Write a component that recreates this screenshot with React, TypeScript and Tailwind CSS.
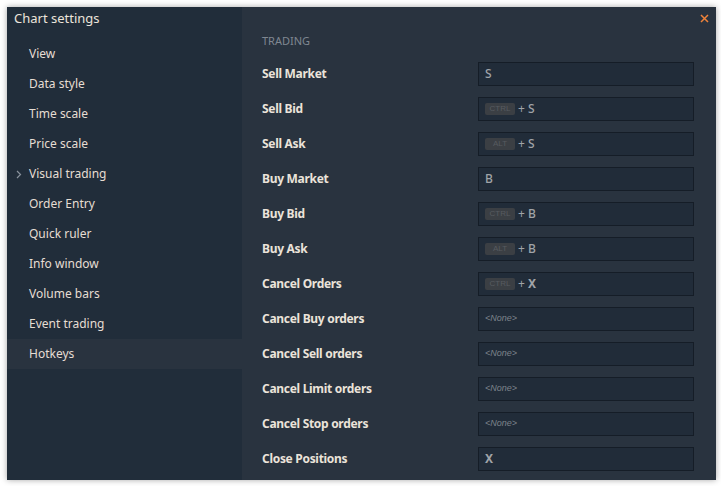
import React from "react";

const menu = [
  "View",
  "Data style",
  "Time scale",
  "Price scale",
  "Visual trading",
  "Order Entry",
  "Quick ruler",
  "Info window",
  "Volume bars",
  "Event trading",
  "Hotkeys",
];

type Val = { mod?: string; key?: string; none?: boolean };
const rows: { label: string; v: Val }[] = [
  { label: "Sell Market", v: { key: "S" } },
  { label: "Sell Bid", v: { mod: "CTRL", key: "S" } },
  { label: "Sell Ask", v: { mod: "ALT", key: "S" } },
  { label: "Buy Market", v: { key: "B" } },
  { label: "Buy Bid", v: { mod: "CTRL", key: "B" } },
  { label: "Buy Ask", v: { mod: "ALT", key: "B" } },
  { label: "Cancel Orders", v: { mod: "CTRL", key: "X" } },
  { label: "Cancel Buy orders", v: { none: true } },
  { label: "Cancel Sell orders", v: { none: true } },
  { label: "Cancel Limit orders", v: { none: true } },
  { label: "Cancel Stop orders", v: { none: true } },
  { label: "Close Positions", v: { key: "X" } },
];

function Value({ v }: { v: Val }) {
  return (
    <div className="w-[216px] h-[24px] bg-[#212c39] border border-[#151d27] flex items-center px-[6px]">
      {v.none ? (
        <span className="italic text-[9px] text-[#7c838b] font-['Liberation_Sans',sans-serif]">&lt;None&gt;</span>
      ) : (
        <>
          {v.mod && (
            <span className="w-[30px] h-[12px] rounded-[2px] bg-[#3b3f44] text-[#575b60] text-[8px] leading-[12px] text-center mr-[3px] font-['Liberation_Sans',sans-serif]">
              {v.mod}
            </span>
          )}
          {v.mod && <span className="text-[12px] text-[#a0a4a8] mr-[3px]">+</span>}
          <span className={`text-[12px] text-[#a0a4a8] ${v.key === "X" ? "font-bold" : "font-medium"}`}>{v.key}</span>
        </>
      )}
    </div>
  );
}

export default function App() {
  return (
    <div className="w-[721px] h-[486px] bg-white relative font-['Noto_Sans',sans-serif]">
      <div className="absolute left-[7px] top-[7px] w-[709px] h-[473px] bg-[#29333f] shadow-[0_0_6px_rgba(0,0,0,0.35)] flex">
        <div className="w-[235px] h-full bg-[#212d3a] flex flex-col">
          <div className="h-[24px] mb-[8px] flex items-center px-[7px] text-[13px] text-[#ece4db]">Chart settings</div>
          <div className="flex flex-col">
            {menu.map((m) => (
              <div
                key={m}
                className={`h-[30px] flex items-center pl-[22px] text-[12px] text-[#e6ddd3] relative ${m === "Hotkeys" ? "bg-[#29333f]" : ""}`}
              >
                {m === "Visual trading" && (
                  <svg className="absolute left-[9px] top-[11px]" width="6" height="9" viewBox="0 0 6 9">
                    <path d="M1 1 L4.5 4.5 L1 8" stroke="#8a929c" strokeWidth="1.2" fill="none" />
                  </svg>
                )}
                {m}
              </div>
            ))}
          </div>
        </div>
        <div className="flex-1 relative pl-[20px] pt-[27px]">
          <svg className="absolute right-[7px] top-[7px]" width="9" height="9" viewBox="0 0 9 9">
            <path d="M1 1 L8 8 M8 1 L1 8" stroke="#f0833a" strokeWidth="1.5" />
          </svg>
          <div className="text-[11px] text-[#7f8791] h-[14px] leading-[14px] mb-[14px]">TRADING</div>
          <div className="flex flex-col gap-[11px]">
            {rows.map((r) => (
              <div key={r.label} className="flex items-center justify-between w-[432px]">
                <span className="text-[12px] font-bold tracking-[-0.3px] text-[#ebe3da]">{r.label}</span>
                <Value v={r.v} />
              </div>
            ))}
          </div>
        </div>
      </div>
    </div>
  );
}
